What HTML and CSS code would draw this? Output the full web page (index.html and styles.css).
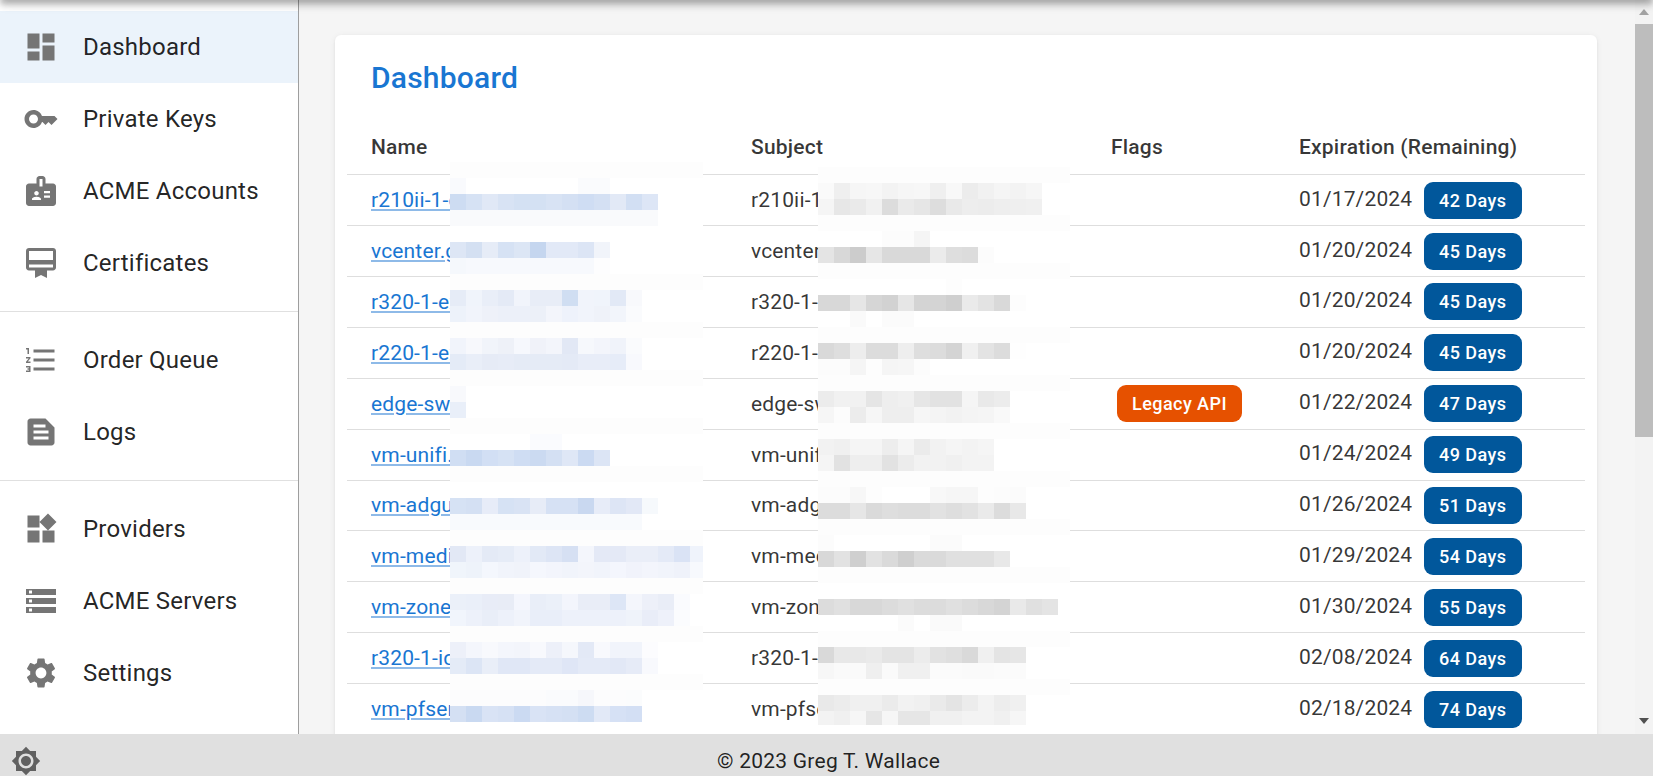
FILE: index.html
```html
<!DOCTYPE html>
<html lang="en">
<head>
<meta charset="utf-8">
<title>Dashboard</title>
<link rel="stylesheet" href="styles.css">
</head>
<body>
<div class="shadowbar"></div>
<div class="app">
  <nav class="sidebar">
    <ul class="navgroup">
      <li class="item active"><svg class="icon" viewBox="0 0 24 24"><path d="M13,3V9H21V3M13,21H21V11H13M3,21H11V15H3M3,13H11V3H3V13Z"/></svg><span>Dashboard</span></li>
      <li class="item"><svg class="icon" viewBox="0 0 24 24"><path d="M21 10h-8.35C11.83 7.67 9.61 6 7 6c-3.31 0-6 2.69-6 6s2.69 6 6 6c2.61 0 4.83-1.67 5.65-4H13l2 2 2-2 2 2 4-4.04L21 10zM7 15c-1.65 0-3-1.35-3-3s1.35-3 3-3 3 1.35 3 3-1.35 3-3 3z"/></svg><span>Private Keys</span></li>
      <li class="item"><svg class="icon" viewBox="0 0 24 24"><path d="M20 7h-5V4c0-1.1-.9-2-2-2h-2c-1.1 0-2 .9-2 2v3H4c-1.1 0-2 .9-2 2v11c0 1.1.9 2 2 2h16c1.1 0 2-.9 2-2V9c0-1.1-.9-2-2-2zM9 12c.83 0 1.5.67 1.5 1.5S9.83 15 9 15s-1.5-.67-1.5-1.5S8.17 12 9 12zm3 6H6v-.75c0-1 2-1.5 3-1.5s3 .5 3 1.5V18zm1-9h-2V4h2v5zm5 7.5h-4V15h4v1.5zm0-3h-4V12h4v1.5z"/></svg><span>ACME Accounts</span></li>
      <li class="item"><svg class="icon" viewBox="0 0 24 24"><path d="M20 2H4c-1.11 0-2 .89-2 2v11c0 1.11.89 2 2 2h4v5l4-2 4 2v-5h4c1.11 0 2-.89 2-2V4c0-1.11-.89-2-2-2zm0 13H4v-2h16v2zm0-5H4V4h16v6z"/></svg><span>Certificates</span></li>
    </ul>
    <ul class="navgroup">
      <li class="item"><svg class="icon" viewBox="0 0 24 24"><path d="M2 17h2v.5H3v1h1v.5H2v1h3v-4H2v1zm1-9h1V4H2v1h1v3zm-1 3h1.8L2 13.1v.9h3v-1H3.2L5 10.9V10H2v1zm5-6v2h14V5H7zm0 14h14v-2H7v2zm0-6h14v-2H7v2z"/></svg><span>Order Queue</span></li>
      <li class="item"><svg class="icon" viewBox="0 0 24 24"><path d="M15 3H5c-1.1 0-2 .9-2 2v14c0 1.1.9 2 2 2h14c1.1 0 2-.9 2-2V9l-6-6zm2 14H7v-2h10v2zm0-4H7v-2h10v2zm-2-4H7V7h8v2z"/></svg><span>Logs</span></li>
    </ul>
    <ul class="navgroup">
      <li class="item"><svg class="icon" viewBox="0 0 24 24"><path d="M13 13v8h8v-8h-8zM3 21h8v-8H3v8zM3 3v8h8V3H3zm13.66-1.31L11 7.34 16.66 13l5.66-5.66-5.66-5.65z"/></svg><span>Providers</span></li>
      <li class="item"><svg class="icon" viewBox="0 0 24 24"><path fill-rule="evenodd" d="M2 20h20v-4H2v4zm2-3h2v2H4v-2zM2 4v4h20V4H2zm4 3H4V5h2v2zm-4 7h20v-4H2v4zm2-3h2v2H4v-2z"/></svg><span>ACME Servers</span></li>
      <li class="item"><svg class="icon" viewBox="0 0 24 24"><path d="M19.14 12.94c.04-.3.06-.61.06-.94 0-.32-.02-.64-.07-.94l2.03-1.58c.18-.14.23-.41.12-.61l-1.92-3.32c-.12-.22-.37-.29-.59-.22l-2.39.96c-.5-.38-1.03-.7-1.62-.94l-.36-2.54c-.04-.24-.24-.41-.48-.41h-3.84c-.24 0-.43.17-.47.41l-.36 2.54c-.59.24-1.13.57-1.62.94l-2.39-.96c-.22-.08-.47 0-.59.22L2.74 8.87c-.12.21-.08.47.12.61l2.03 1.58c-.05.3-.09.63-.09.94s.02.64.07.94l-2.03 1.58c-.18.14-.23.41-.12.61l1.92 3.32c.12.22.37.29.59.22l2.39-.96c.5.38 1.03.7 1.62.94l.36 2.54c.05.24.24.41.48.41h3.84c.24 0 .44-.17.47-.41l.36-2.54c.59-.24 1.13-.56 1.62-.94l2.39.96c.22.08.47 0 .59-.22l1.92-3.32c.12-.22.07-.47-.12-.61l-2.01-1.58zM12 15.6c-1.98 0-3.6-1.62-3.6-3.6s1.62-3.6 3.6-3.6 3.6 1.62 3.6 3.6-1.62 3.6-3.6 3.6z"/></svg><span>Settings</span></li>
    </ul>
  </nav>
  <main class="main">
    <section class="card">
      <h1 class="title">Dashboard</h1>
      <table class="certs">
        <thead>
          <tr><th>Name</th><th>Subject</th><th>Flags</th><th>Expiration (Remaining)</th></tr>
        </thead>
        <tbody>
          <tr><td><a href="#">r210ii-1-ex</a></td><td>r210ii-1-ex</td><td></td><td><span class="date">01/17/2024</span><span class="chip">42 Days</span></td></tr>
          <tr><td><a href="#">vcenter.ga</a></td><td>vcenter.ga</td><td></td><td><span class="date">01/20/2024</span><span class="chip">45 Days</span></td></tr>
          <tr><td><a href="#">r320-1-ex</a></td><td>r320-1-ex</td><td></td><td><span class="date">01/20/2024</span><span class="chip">45 Days</span></td></tr>
          <tr><td><a href="#">r220-1-ex</a></td><td>r220-1-ex</td><td></td><td><span class="date">01/20/2024</span><span class="chip">45 Days</span></td></tr>
          <tr><td><a href="#">edge-swi</a></td><td>edge-swi</td><td><span class="chip warn">Legacy API</span></td><td><span class="date">01/22/2024</span><span class="chip">47 Days</span></td></tr>
          <tr><td><a href="#">vm-unifi.ex</a></td><td>vm-unifi.ex</td><td></td><td><span class="date">01/24/2024</span><span class="chip">49 Days</span></td></tr>
          <tr><td><a href="#">vm-adgua</a></td><td>vm-adgua</td><td></td><td><span class="date">01/26/2024</span><span class="chip">51 Days</span></td></tr>
          <tr><td><a href="#">vm-media</a></td><td>vm-media</td><td></td><td><span class="date">01/29/2024</span><span class="chip">54 Days</span></td></tr>
          <tr><td><a href="#">vm-zonem</a></td><td>vm-zonem</td><td></td><td><span class="date">01/30/2024</span><span class="chip">55 Days</span></td></tr>
          <tr><td><a href="#">r320-1-idr</a></td><td>r320-1-idr</td><td></td><td><span class="date">02/08/2024</span><span class="chip">64 Days</span></td></tr>
          <tr><td><a href="#">vm-pfsen</a></td><td>vm-pfsen</td><td></td><td><span class="date">02/18/2024</span><span class="chip">74 Days</span></td></tr>
        </tbody>
      </table>
      <svg class="mosaic mosaic-name" viewBox="0 0 15.8125 35" aria-hidden="true">
        <path class="base" d="M0 0h16v35H0z"/>
        <path class="faint" d="M0 0h16v1H0zM0 7h16v1H0zM0 10h16v1H0zM0 13h16v1H0zM0 16h16v1H0zM0 19h16v1H0zM0 23h16v1H0zM0 26h16v1H0zM0 29h16v1H0zM0 32h16v1H0z"/>
        <rect x="0" y="1" fill="#f9fafd"/><rect x="8" y="1" fill="#fafbfd"/><rect x="9" y="1" fill="#fafbfd"/>
        <rect x="0" y="2" fill="#cddcf2"/><rect x="1" y="2" fill="#d6e2f4"/><rect x="2" y="2" fill="#e0e8f6"/><rect x="3" y="2" fill="#d8e3f4"/><rect x="4" y="2" fill="#d4e1f3"/><rect x="5" y="2" fill="#d4e1f3"/><rect x="6" y="2" fill="#d8e3f4"/><rect x="7" y="2" fill="#d4e0f3"/><rect x="8" y="2" fill="#cfddf3"/><rect x="9" y="2" fill="#d4e0f3"/><rect x="10" y="2" fill="#e2e9f6"/><rect x="11" y="2" fill="#d2dff3"/><rect x="12" y="2" fill="#dde6f6"/>
        <path class="l1" d="M0 3h13v1H0z"/>
        <rect x="0" y="5" fill="#dde6f5"/><rect x="1" y="5" fill="#d4e0f2"/><rect x="2" y="5" fill="#e6ecf7"/><rect x="3" y="5" fill="#d6e2f4"/><rect x="4" y="5" fill="#dce6f5"/><rect x="5" y="5" fill="#c5d6ef"/><rect x="6" y="5" fill="#e2e9f7"/><rect x="7" y="5" fill="#e2e9f7"/><rect x="8" y="5" fill="#dce5f5"/><rect x="9" y="5" fill="#f1f4fa"/>
        <rect x="0" y="6" fill="#f5f8fc"/><rect x="1" y="6" fill="#f7f9fd"/><rect x="2" y="6" fill="#f7f9fd"/><rect x="3" y="6" fill="#f7f9fd"/><rect x="4" y="6" fill="#f7f9fd"/><rect x="5" y="6" fill="#f7f9fd"/><rect x="6" y="6" fill="#f7f9fd"/><rect x="7" y="6" fill="#f7f9fd"/><rect x="8" y="6" fill="#f7f9fd"/><rect x="9" y="6" fill="#fdfdfe"/>
        <rect x="0" y="8" fill="#e6ecf7"/><rect x="1" y="8" fill="#f0f4fb"/><rect x="2" y="8" fill="#e9eef8"/><rect x="3" y="8" fill="#e4eaf6"/><rect x="4" y="8" fill="#f1f4fb"/><rect x="5" y="8" fill="#e8edf7"/><rect x="6" y="8" fill="#e8edf7"/><rect x="7" y="8" fill="#d0def2"/><rect x="8" y="8" fill="#f1f4fb"/><rect x="9" y="8" fill="#f0f4fb"/><rect x="10" y="8" fill="#e2e9f6"/><rect x="11" y="8" fill="#f8f9fc"/>
        <rect x="0" y="9" fill="#edf2fa"/><rect x="1" y="9" fill="#f1f4fb"/><rect x="2" y="9" fill="#eef1f9"/><rect x="3" y="9" fill="#ecf0f9"/><rect x="4" y="9" fill="#ecf0f9"/><rect x="5" y="9" fill="#ecf0f8"/><rect x="6" y="9" fill="#f3f5fb"/><rect x="7" y="9" fill="#eef2fb"/><rect x="8" y="9" fill="#f1f4fb"/><rect x="9" y="9" fill="#eff2f9"/><rect x="10" y="9" fill="#f2f5fb"/><rect x="11" y="9" fill="#fafbfd"/>
        <rect x="0" y="11" fill="#f1f4fb"/><rect x="1" y="11" fill="#f7f8fc"/><rect x="2" y="11" fill="#f1f4fa"/><rect x="3" y="11" fill="#eef1f8"/><rect x="4" y="11" fill="#f6f8fd"/><rect x="5" y="11" fill="#f0f2f9"/><rect x="6" y="11" fill="#f3f5fb"/><rect x="7" y="11" fill="#e2e8f5"/><rect x="8" y="11" fill="#f6f8fc"/><rect x="9" y="11" fill="#f3f5fb"/><rect x="10" y="11" fill="#f0f3fa"/><rect x="11" y="11" fill="#fafbfd"/>
        <rect x="0" y="12" fill="#e4ebf7"/><rect x="1" y="12" fill="#e9eef8"/><rect x="2" y="12" fill="#e6ebf6"/><rect x="3" y="12" fill="#e7ecf7"/><rect x="4" y="12" fill="#e5ebf6"/><rect x="5" y="12" fill="#e5ebf6"/><rect x="6" y="12" fill="#e5ebf6"/><rect x="7" y="12" fill="#e4eaf6"/><rect x="8" y="12" fill="#e8edf8"/><rect x="9" y="12" fill="#e8edf8"/><rect x="10" y="12" fill="#e6ecf8"/><rect x="11" y="12" fill="#f8f9fd"/>
        <rect x="0" y="14" fill="#f8f9fc"/><rect x="0" y="15" fill="#e9eff9"/>
        <rect x="5" y="17" fill="#fafbfe"/><rect x="6" y="17" fill="#fafbfe"/>
        <rect x="0" y="18" fill="#d0def3"/><rect x="1" y="18" fill="#c9d9f1"/><rect x="2" y="18" fill="#d2dff4"/><rect x="3" y="18" fill="#d6e2f4"/><rect x="4" y="18" fill="#cfddf3"/><rect x="5" y="18" fill="#cbdaf1"/><rect x="6" y="18" fill="#d4e0f3"/><rect x="7" y="18" fill="#dfe7f6"/><rect x="8" y="18" fill="#cbdaf2"/><rect x="9" y="18" fill="#dce5f5"/>
        <rect x="0" y="21" fill="#d6e2f4"/><rect x="1" y="21" fill="#d4e0f3"/><rect x="2" y="21" fill="#e7ecf8"/><rect x="3" y="21" fill="#d6e2f4"/><rect x="4" y="21" fill="#d9e3f4"/><rect x="5" y="21" fill="#e7ecf7"/><rect x="6" y="21" fill="#d6e1f4"/><rect x="7" y="21" fill="#d6e1f4"/><rect x="8" y="21" fill="#c9d8f0"/><rect x="9" y="21" fill="#e7ecf8"/><rect x="10" y="21" fill="#dde5f5"/><rect x="11" y="21" fill="#e2e8f6"/><rect x="12" y="21" fill="#f6f9fc"/>
        <path class="l2" d="M0 22h12v1H0z"/>
        <rect x="0" y="24" fill="#e2e8f5"/><rect x="1" y="24" fill="#edf1fa"/><rect x="2" y="24" fill="#e4eaf6"/><rect x="3" y="24" fill="#e6ecf7"/><rect x="4" y="24" fill="#edf1fa"/><rect x="5" y="24" fill="#e2e9f6"/><rect x="6" y="24" fill="#dde5f5"/><rect x="7" y="24" fill="#d6e0f3"/><rect x="8" y="24" fill="#f4f6fc"/><rect x="9" y="24" fill="#e4e9f6"/><rect x="10" y="24" fill="#e4e9f6"/><rect x="11" y="24" fill="#eaeef8"/><rect x="12" y="24" fill="#eaeef8"/><rect x="13" y="24" fill="#e4eaf7"/><rect x="14" y="24" fill="#dae3f5"/><rect x="15" y="24" fill="#eff3fb"/>
        <rect x="0" y="25" fill="#f0f5fb"/><rect x="1" y="25" fill="#eef3fa"/><rect x="2" y="25" fill="#f4f7fd"/><rect x="3" y="25" fill="#f1f4fb"/><rect x="4" y="25" fill="#f0f3fa"/><rect x="5" y="25" fill="#f5f7fd"/><rect x="6" y="25" fill="#f3f5fc"/><rect x="7" y="25" fill="#f1f4fb"/><rect x="8" y="25" fill="#f3f5fb"/><rect x="9" y="25" fill="#f1f4fb"/><rect x="10" y="25" fill="#f4f6fd"/><rect x="11" y="25" fill="#f1f3fb"/><rect x="12" y="25" fill="#f3f5fc"/><rect x="13" y="25" fill="#f1f4fb"/><rect x="14" y="25" fill="#eff2fa"/><rect x="15" y="25" fill="#f7f9fd"/>
        <rect x="0" y="27" fill="#ebf0f9"/><rect x="1" y="27" fill="#eaeff9"/><rect x="2" y="27" fill="#e8ecf7"/><rect x="3" y="27" fill="#e8ecf6"/><rect x="4" y="27" fill="#f4f6fd"/><rect x="5" y="27" fill="#e9eef8"/><rect x="6" y="27" fill="#ebf0f9"/><rect x="7" y="27" fill="#f3f5fc"/><rect x="8" y="27" fill="#e9edf7"/><rect x="9" y="27" fill="#e9edf7"/><rect x="10" y="27" fill="#dde6f6"/><rect x="11" y="27" fill="#f4f6fc"/><rect x="12" y="27" fill="#edf0f9"/><rect x="13" y="27" fill="#e9edf7"/><rect x="14" y="27" fill="#fafbfe"/>
        <rect x="0" y="28" fill="#f1f5fc"/><rect x="1" y="28" fill="#edf1fa"/><rect x="2" y="28" fill="#e9eef8"/><rect x="3" y="28" fill="#edf1fa"/><rect x="4" y="28" fill="#f1f4fb"/><rect x="5" y="28" fill="#e9eef9"/><rect x="6" y="28" fill="#e9eef9"/><rect x="7" y="28" fill="#edf1fa"/><rect x="8" y="28" fill="#edf1fa"/><rect x="9" y="28" fill="#edf1fa"/><rect x="10" y="28" fill="#edf1fa"/><rect x="11" y="28" fill="#eff3fa"/><rect x="12" y="28" fill="#e9edf8"/><rect x="13" y="28" fill="#eef1fa"/><rect x="14" y="28" fill="#fbfcfe"/>
        <rect x="0" y="30" fill="#edf0f9"/><rect x="1" y="30" fill="#f4f6fc"/><rect x="2" y="30" fill="#f8f9fd"/><rect x="3" y="30" fill="#f4f6fc"/><rect x="4" y="30" fill="#f3f5fb"/><rect x="5" y="30" fill="#f8f9fd"/><rect x="6" y="30" fill="#edf0f9"/><rect x="7" y="30" fill="#f5f7fc"/><rect x="8" y="30" fill="#e3e9f6"/><rect x="9" y="30" fill="#f8f9fd"/><rect x="10" y="30" fill="#f1f4fb"/><rect x="11" y="30" fill="#f1f4fb"/><rect x="12" y="30" fill="#fcfcfe"/>
        <rect x="0" y="31" fill="#e4ebf7"/><rect x="1" y="31" fill="#dce5f5"/><rect x="2" y="31" fill="#e9eef8"/><rect x="3" y="31" fill="#e0e7f6"/><rect x="4" y="31" fill="#e0e7f6"/><rect x="5" y="31" fill="#e4eaf7"/><rect x="6" y="31" fill="#e4eaf7"/><rect x="7" y="31" fill="#dfe6f6"/><rect x="8" y="31" fill="#e4eaf7"/><rect x="9" y="31" fill="#e4eaf7"/><rect x="10" y="31" fill="#e2e8f6"/><rect x="11" y="31" fill="#e6ebf7"/><rect x="12" y="31" fill="#f8f9fd"/>
        <path class="l3" d="M0 33h12v1H0z"/><rect x="6" y="33" fill="#fafbfd"/><rect x="7" y="33" fill="#fafbfd"/><rect x="8" y="33" fill="#f6f7fb"/><rect x="11" y="33" fill="#fbfcfd"/>
        <rect x="0" y="34" fill="#d4e0f3"/><rect x="1" y="34" fill="#c9d9f1"/><rect x="2" y="34" fill="#d9e3f5"/><rect x="3" y="34" fill="#d6e1f4"/><rect x="4" y="34" fill="#cbdaf2"/><rect x="5" y="34" fill="#d9e3f5"/><rect x="6" y="34" fill="#d6e1f4"/><rect x="7" y="34" fill="#d4e0f3"/><rect x="8" y="34" fill="#cddcf2"/><rect x="9" y="34" fill="#e2e9f7"/><rect x="10" y="34" fill="#d6e1f5"/><rect x="11" y="34" fill="#d3dff4"/>
      </svg>
      <svg class="mosaic mosaic-subject" viewBox="0 0 15.75 34.875" aria-hidden="true">
        <path class="base" d="M0 0h16v35H0z"/>
        <path class="faint" d="M0 0h16v1H0zM0 3h16v1H0zM0 6h16v1H0zM0 10h16v1H0zM0 13h16v1H0zM0 16h16v1H0zM0 19h16v1H0zM0 22h16v1H0zM0 25h16v1H0zM0 29h16v1H0zM0 32h16v1H0z"/>
        <rect x="0" y="1" fill="#fafafa"/><rect x="1" y="1" fill="#efefef"/><rect x="2" y="1" fill="#f6f6f6"/><rect x="3" y="1" fill="#f7f7f7"/><rect x="4" y="1" fill="#f3f3f3"/><rect x="5" y="1" fill="#f6f6f6"/><rect x="6" y="1" fill="#f7f7f7"/><rect x="7" y="1" fill="#efefef"/><rect x="8" y="1" fill="#f8f8f8"/><rect x="9" y="1" fill="#ececec"/><rect x="10" y="1" fill="#f1f1f1"/><rect x="11" y="1" fill="#f5f5f5"/><rect x="12" y="1" fill="#f3f3f3"/><rect x="13" y="1" fill="#f6f6f6"/>
        <rect x="0" y="2" fill="#f5f5f5"/><rect x="1" y="2" fill="#e7e7e7"/><rect x="2" y="2" fill="#eaeaea"/><rect x="3" y="2" fill="#f1f1f1"/><rect x="4" y="2" fill="#dcdcdc"/><rect x="5" y="2" fill="#eaeaea"/><rect x="6" y="2" fill="#e6e6e6"/><rect x="7" y="2" fill="#dddddd"/><rect x="8" y="2" fill="#e9e9e9"/><rect x="9" y="2" fill="#ededed"/><rect x="10" y="2" fill="#ececec"/><rect x="11" y="2" fill="#eeeeee"/><rect x="12" y="2" fill="#efefef"/><rect x="13" y="2" fill="#f0f0f0"/>
        <rect x="4" y="4" fill="#fcfcfc"/><rect x="5" y="4" fill="#fcfcfc"/><rect x="6" y="4" fill="#f5f5f5"/>
        <rect x="0" y="5" fill="#e4e4e4"/><rect x="1" y="5" fill="#d8d8d8"/><rect x="2" y="5" fill="#cccccc"/><rect x="3" y="5" fill="#e6e6e6"/><rect x="4" y="5" fill="#d9d9d9"/><rect x="5" y="5" fill="#d9d9d9"/><rect x="6" y="5" fill="#d9d9d9"/><rect x="7" y="5" fill="#ebebeb"/><rect x="8" y="5" fill="#dedede"/><rect x="9" y="5" fill="#dcdcdc"/><rect x="10" y="5" fill="#fcfcfc"/>
        <rect x="8" y="7" fill="#fdfdfd"/>
        <rect x="0" y="8" fill="#d8d8d8"/><rect x="1" y="8" fill="#d8d8d8"/><rect x="2" y="8" fill="#e6e6e6"/><rect x="3" y="8" fill="#d6d6d6"/><rect x="4" y="8" fill="#d2d2d2"/><rect x="5" y="8" fill="#e6e6e6"/><rect x="6" y="8" fill="#d4d4d4"/><rect x="7" y="8" fill="#d4d4d4"/><rect x="8" y="8" fill="#cfcfcf"/><rect x="9" y="8" fill="#eaeaea"/><rect x="10" y="8" fill="#e3e3e3"/><rect x="11" y="8" fill="#d9d9d9"/><rect x="12" y="8" fill="#fdfdfd"/>
        <rect x="2" y="9" fill="#fafafa"/><rect x="4" y="9" fill="#fbfbfb"/><rect x="5" y="9" fill="#fbfbfb"/>
        <rect x="0" y="11" fill="#d9d9d9"/><rect x="1" y="11" fill="#dedede"/><rect x="2" y="11" fill="#ededed"/><rect x="3" y="11" fill="#dcdcdc"/><rect x="4" y="11" fill="#dcdcdc"/><rect x="5" y="11" fill="#eeeeee"/><rect x="6" y="11" fill="#dedede"/><rect x="7" y="11" fill="#dcdcdc"/><rect x="8" y="11" fill="#d4d4d4"/><rect x="9" y="11" fill="#f0f0f0"/><rect x="10" y="11" fill="#e3e3e3"/><rect x="11" y="11" fill="#dcdcdc"/><rect x="12" y="11" fill="#fefefe"/>
        <rect x="0" y="12" fill="#fcfcfc"/><rect x="1" y="12" fill="#fcfcfc"/><rect x="2" y="12" fill="#f5f5f5"/><rect x="3" y="12" fill="#fdfdfd"/><rect x="4" y="12" fill="#f5f5f5"/><rect x="5" y="12" fill="#f6f6f6"/><rect x="6" y="12" fill="#fcfcfc"/>
        <rect x="0" y="14" fill="#ececec"/><rect x="1" y="14" fill="#f1f1f1"/><rect x="2" y="14" fill="#f1f1f1"/><rect x="3" y="14" fill="#e5e5e5"/><rect x="4" y="14" fill="#eeeeee"/><rect x="5" y="14" fill="#f0f0f0"/><rect x="6" y="14" fill="#e6e6e6"/><rect x="7" y="14" fill="#e2e2e2"/><rect x="8" y="14" fill="#e2e2e2"/><rect x="9" y="14" fill="#f5f5f5"/><rect x="10" y="14" fill="#e9e9e9"/><rect x="11" y="14" fill="#ececec"/>
        <rect x="0" y="15" fill="#f6f6f6"/><rect x="1" y="15" fill="#fcfcfc"/><rect x="2" y="15" fill="#ececec"/><rect x="3" y="15" fill="#f6f6f6"/><rect x="4" y="15" fill="#eeeeee"/><rect x="5" y="15" fill="#eeeeee"/><rect x="6" y="15" fill="#f6f6f6"/><rect x="7" y="15" fill="#f4f4f4"/><rect x="8" y="15" fill="#f2f2f2"/><rect x="9" y="15" fill="#f4f4f4"/><rect x="10" y="15" fill="#f5f5f5"/><rect x="11" y="15" fill="#f9f9f9"/>
        <rect x="0" y="17" fill="#f2f2f2"/><rect x="1" y="17" fill="#f0f0f0"/><rect x="2" y="17" fill="#f5f5f5"/><rect x="3" y="17" fill="#f5f5f5"/><rect x="4" y="17" fill="#ededed"/><rect x="5" y="17" fill="#f5f5f5"/><rect x="6" y="17" fill="#ebebeb"/><rect x="7" y="17" fill="#f2f2f2"/><rect x="8" y="17" fill="#f5f5f5"/><rect x="9" y="17" fill="#f3f3f3"/><rect x="10" y="17" fill="#f5f5f5"/>
        <rect x="0" y="18" fill="#f5f5f5"/><rect x="1" y="18" fill="#e2e2e2"/><rect x="2" y="18" fill="#eeeeee"/><rect x="3" y="18" fill="#eeeeee"/><rect x="4" y="18" fill="#e2e2e2"/><rect x="5" y="18" fill="#ececec"/><rect x="6" y="18" fill="#f2f2f2"/><rect x="7" y="18" fill="#f2f2f2"/><rect x="8" y="18" fill="#f0f0f0"/><rect x="9" y="18" fill="#f3f3f3"/><rect x="10" y="18" fill="#f3f3f3"/>
        <rect x="0" y="20" fill="#fcfcfc"/><rect x="1" y="20" fill="#fcfcfc"/><rect x="2" y="20" fill="#f7f7f7"/><rect x="3" y="20" fill="#fdfdfd"/><rect x="7" y="20" fill="#f8f8f8"/><rect x="8" y="20" fill="#f6f6f6"/><rect x="9" y="20" fill="#f6f6f6"/><rect x="10" y="20" fill="#fdfdfd"/><rect x="11" y="20" fill="#fcfcfc"/><rect x="12" y="20" fill="#fbfbfb"/>
        <rect x="0" y="21" fill="#dcdcdc"/><rect x="1" y="21" fill="#dcdcdc"/><rect x="2" y="21" fill="#e6e6e6"/><rect x="3" y="21" fill="#dadada"/><rect x="4" y="21" fill="#dedede"/><rect x="5" y="21" fill="#dcdcdc"/><rect x="6" y="21" fill="#dcdcdc"/><rect x="7" y="21" fill="#e2e2e2"/><rect x="8" y="21" fill="#dedede"/><rect x="9" y="21" fill="#e2e2e2"/><rect x="10" y="21" fill="#eaeaea"/><rect x="11" y="21" fill="#dcdcdc"/><rect x="12" y="21" fill="#e8e8e8"/>
        <rect x="0" y="23" fill="#fcfcfc"/><rect x="7" y="23" fill="#fbfbfb"/><rect x="8" y="23" fill="#fbfbfb"/>
        <rect x="0" y="24" fill="#d8d8d8"/><rect x="1" y="24" fill="#e2e2e2"/><rect x="2" y="24" fill="#cfcfcf"/><rect x="3" y="24" fill="#e2e2e2"/><rect x="4" y="24" fill="#dadada"/><rect x="5" y="24" fill="#cfcfcf"/><rect x="6" y="24" fill="#dadada"/><rect x="7" y="24" fill="#dadada"/><rect x="8" y="24" fill="#e0e0e0"/><rect x="9" y="24" fill="#e0e0e0"/><rect x="10" y="24" fill="#e0e0e0"/><rect x="11" y="24" fill="#e8e8e8"/>
        <rect x="0" y="27" fill="#dcdcdc"/><rect x="1" y="27" fill="#e0e0e0"/><rect x="2" y="27" fill="#d8d8d8"/><rect x="3" y="27" fill="#d8d8d8"/><rect x="4" y="27" fill="#dcdcdc"/><rect x="5" y="27" fill="#e0e0e0"/><rect x="6" y="27" fill="#dcdcdc"/><rect x="7" y="27" fill="#dcdcdc"/><rect x="8" y="27" fill="#e0e0e0"/><rect x="9" y="27" fill="#dcdcdc"/><rect x="10" y="27" fill="#d8d8d8"/><rect x="11" y="27" fill="#d4d4d4"/><rect x="12" y="27" fill="#e9e9e9"/><rect x="13" y="27" fill="#e0e0e0"/><rect x="14" y="27" fill="#e4e4e4"/>
        <rect x="5" y="28" fill="#fbfbfb"/><rect x="7" y="28" fill="#fafafa"/><rect x="8" y="28" fill="#fafafa"/>
        <rect x="0" y="30" fill="#d9d9d9"/><rect x="1" y="30" fill="#e8e8e8"/><rect x="2" y="30" fill="#e8e8e8"/><rect x="3" y="30" fill="#eaeaea"/><rect x="4" y="30" fill="#e4e4e4"/><rect x="5" y="30" fill="#e4e4e4"/><rect x="6" y="30" fill="#ececec"/><rect x="7" y="30" fill="#e2e2e2"/><rect x="8" y="30" fill="#dfdfdf"/><rect x="9" y="30" fill="#d9d9d9"/><rect x="10" y="30" fill="#f0f0f0"/><rect x="11" y="30" fill="#e4e4e4"/><rect x="12" y="30" fill="#e6e6e6"/>
        <rect x="0" y="31" fill="#f7f7f7"/><rect x="1" y="31" fill="#fafafa"/><rect x="2" y="31" fill="#fafafa"/><rect x="3" y="31" fill="#efefef"/><rect x="4" y="31" fill="#fafafa"/><rect x="5" y="31" fill="#f0f0f0"/><rect x="6" y="31" fill="#f0f0f0"/><rect x="7" y="31" fill="#fbfbfb"/><rect x="8" y="31" fill="#fbfbfb"/><rect x="9" y="31" fill="#fafafa"/><rect x="10" y="31" fill="#fafafa"/><rect x="11" y="31" fill="#fbfbfb"/><rect x="12" y="31" fill="#fbfbfb"/>
        <rect x="0" y="33" fill="#e9e9e9"/><rect x="1" y="33" fill="#ececec"/><rect x="2" y="33" fill="#f0f0f0"/><rect x="3" y="33" fill="#f0f0f0"/><rect x="4" y="33" fill="#ebebeb"/><rect x="5" y="33" fill="#f2f2f2"/><rect x="6" y="33" fill="#f0f0f0"/><rect x="7" y="33" fill="#eaeaea"/><rect x="8" y="33" fill="#e4e4e4"/><rect x="9" y="33" fill="#ececec"/><rect x="10" y="33" fill="#f3f3f3"/><rect x="11" y="33" fill="#ededed"/><rect x="12" y="33" fill="#f0f0f0"/>
        <rect x="0" y="34" fill="#f3f3f3"/><rect x="1" y="34" fill="#f0f0f0"/><rect x="2" y="34" fill="#f6f6f6"/><rect x="3" y="34" fill="#e6e6e6"/><rect x="4" y="34" fill="#f6f6f6"/><rect x="5" y="34" fill="#e6e6e6"/><rect x="6" y="34" fill="#e6e6e6"/><rect x="7" y="34" fill="#f0f0f0"/><rect x="8" y="34" fill="#f0f0f0"/><rect x="9" y="34" fill="#f3f3f3"/><rect x="10" y="34" fill="#f3f3f3"/><rect x="11" y="34" fill="#f0f0f0"/><rect x="12" y="34" fill="#f6f6f6"/>
      </svg>
    </section>
  </main>
  <div class="scrollbar" aria-hidden="true">
    <div class="arrow arrow-up"></div>
    <div class="thumb"></div>
    <div class="track"></div>
    <div class="arrow arrow-down"></div>
  </div>
</div>
<footer class="footer">
  <svg class="theme" viewBox="0 0 24 24"><path d="M20 8.69V4h-4.69L12 .69 8.69 4H4v4.69L.69 12 4 15.31V20h4.69L12 23.31 15.31 20H20v-4.69L23.31 12 20 8.69zM12 18c-3.31 0-6-2.69-6-6s2.69-6 6-6 6 2.69 6 6-2.69 6-6 6zm0-10c-2.21 0-4 1.79-4 4s1.79 4 4 4 4-1.79 4-4-1.79-4-4-4z"/></svg>
  <p class="copy">© 2023 Greg T. Wallace</p>
</footer>
</body>
</html>
```
FILE: styles.css
```css
* { box-sizing: border-box; }
html, body { margin: 0; height: 100%; overflow: hidden; }
body {
  font-family: Roboto, "Liberation Sans", sans-serif;
  color: rgba(0, 0, 0, .87);
  background: #f5f5f5;
  display: flex;
  flex-direction: column;
}
.shadowbar {
  position: fixed;
  top: -10px;
  left: 0;
  right: 0;
  height: 10px;
  z-index: 5;
  box-shadow: 0 3px 6px -1px rgba(0, 0, 0, .22), 0 6px 7px rgba(0, 0, 0, .14), 0 2px 14px rgba(0, 0, 0, .12);
}
.app { flex: 0 0 734px; display: flex; overflow: hidden; }

.sidebar {
  flex: 0 0 299px;
  background: #fff;
  border-right: 1px solid #9e9e9e;
  padding-top: 11px;
}
.navgroup { list-style: none; margin: 0; padding: 0; }
.navgroup + .navgroup { border-top: 1px solid #e0e0e0; margin-top: 12px; padding-top: 12px; }
.item {
  height: 72px;
  padding-left: 23px;
  display: flex;
  align-items: center;
  gap: 24px;
  font-size: 24px;
  letter-spacing: .225px;
  color: rgba(0, 0, 0, .87);
}
.item.active { background: #ebf3fb; }
.icon { width: 36px; height: 36px; fill: #757575; flex: none; }

.main { flex: 1; min-width: 0; padding: 35px 38px 0 36px; overflow: hidden; }
.card {
  position: relative;
  background: #fff;
  border-radius: 6px;
  padding: 0 12px;
  height: 760px;
  box-shadow: 0 2px 2px -1px rgba(0, 0, 0, .08), 0 1px 3px rgba(0, 0, 0, .06), 0 1px 7px rgba(0, 0, 0, .05);
}
.title {
  margin: 0;
  padding: 25px 24px 0;
  font-size: 30px;
  line-height: 36px;
  font-weight: 500;
  letter-spacing: .22px;
  color: #1976d2;
  height: 85px;
}
.certs { width: 1238px; border-collapse: collapse; table-layout: fixed; font-size: 21px; }
.certs th:nth-child(1) { width: 380px; }
.certs th:nth-child(2) { width: 360px; }
.certs th:nth-child(3) { width: 188px; }
.certs th:nth-child(4) { width: 310px; }
.certs th, .certs td { text-align: left; padding: 0 24px; border-bottom: 1px solid #dedede; white-space: nowrap; letter-spacing: .15px; }
.certs th { height: 54.7px; font-weight: 500; letter-spacing: .2px; color: rgba(0, 0, 0, .78); }
.certs td { height: 50.9px; color: rgba(0, 0, 0, .8); }
.certs a { color: #1976d2; text-decoration-thickness: 2px; text-underline-offset: 2px; text-decoration-color: #8ebae8; }
.date { display: inline-block; width: 125px; }
.chip {
  display: inline-block;
  height: 37px;
  line-height: 37px;
  padding: 0 15px;
  border-radius: 9px;
  background: #01579b;
  color: #fff;
  font-size: 18px;
  font-weight: 500;
  letter-spacing: .45px;
  vertical-align: middle;
}
.chip.warn { background: #e65100; margin-left: 6px; }

.mosaic { position: absolute; display: block; }
.mosaic-name { left: 115px; top: 127px; width: 253px; height: 560px; }
.mosaic-subject { left: 483px; top: 132px; width: 252px; height: 558px; }
.mosaic rect { width: 1px; height: 1px; }
.mosaic .base { fill: #fff; }
.mosaic .faint { fill: #fdfdfd; }
.mosaic .l1 { fill: #f9fafc; }
.mosaic .l2 { fill: #f8fafd; }
.mosaic .l3 { fill: #fcfcfd; }

.scrollbar { flex: 0 0 18px; display: flex; flex-direction: column; background: #f3f3f3; align-items: center; }
.arrow { flex: 0 0 24px; width: 0; height: 0; border-left: 5.5px solid transparent; border-right: 5.5px solid transparent; }
.arrow-up { flex-basis: 6px; margin: 9px 0 9px; border-bottom: 6px solid #a3a3a3; }
.arrow-down { flex-basis: 6px; margin: 0 0 10px; border-top: 6px solid #505050; }
.thumb { flex: 0 0 413px; width: 18px; background: #bdbdbd; }
.track { flex: 1; }

.footer {
  flex: 0 0 42px;
  background: #e0e0e0;
  position: relative;
  display: flex;
  justify-content: center;
  overflow: hidden;
}
.theme { position: absolute; left: 11px; top: 12px; width: 30px; height: 30px; fill: #616161; }
.copy { margin: 15px 0 0 4px; font-size: 21px; line-height: 24px; letter-spacing: .25px; color: rgba(0, 0, 0, .87); }
```
